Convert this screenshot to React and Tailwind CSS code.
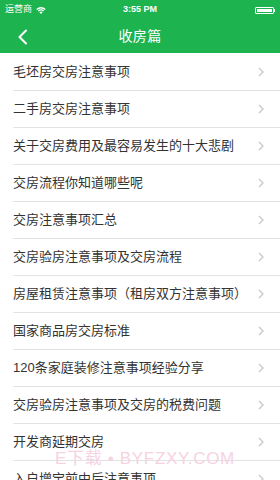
const ITEMS = [
  '毛坯房交房注意事项',
  '二手房交房注意事项',
  '关于交房费用及最容易发生的十大悲剧',
  '交房流程你知道哪些呢',
  '交房注意事项汇总',
  '交房验房注意事项及交房流程',
  '房屋租赁注意事项（租房双方注意事项）',
  '国家商品房交房标准',
  '120条家庭装修注意事项经验分享',
  '交房验房注意事项及交房的税费问题',
  '开发商延期交房',
  '入户增宝前中后注意事项',
];

const FONT = { fontFamily: '"Liberation Sans", "Noto Sans CJK SC", sans-serif' };

export default function App() {
  return (
    <div className="relative w-[280px] h-[480px] overflow-hidden bg-white" style={FONT}>
      {/* ── Header ─────────────────────────────── */}
      <header className="bg-[#1db34f] text-white h-[53px] flex flex-col">
        <div className="h-[20px] flex items-center justify-between px-[5px] relative">
          <div className="flex items-center gap-[4px] text-[9px]">
            <span>运营商</span>
            <svg width="10" height="8" viewBox="0 0 10 8" fill="white">
              <path d="M5 8 L3.4 6.2 A2.4 2.4 0 0 1 6.6 6.2 Z" />
              <path d="M1.9 4.6 A4.4 4.4 0 0 1 8.1 4.6 L7.2 5.5 A3.1 3.1 0 0 0 2.8 5.5 Z" />
              <path d="M0.3 3 A6.8 6.8 0 0 1 9.7 3 L8.8 3.9 A5.5 5.5 0 0 0 1.2 3.9 Z" />
            </svg>
          </div>
          <span className="absolute left-1/2 -translate-x-1/2 text-[9px] font-bold">3:55 PM</span>
          <div className="flex items-center">
            <div className="w-[19px] h-[7px] border border-white rounded-[1px] p-[1px]">
              <div className="w-full h-full bg-white" />
            </div>
            <div className="w-[1px] h-[3px] bg-white" />
          </div>
        </div>
        <div className="flex-1 flex items-center relative">
          <svg className="absolute left-[17px]" width="11" height="16" viewBox="0 0 11 16" fill="none">
            <path d="M9 1.5 L2.5 8 L9 14.5" stroke="white" strokeWidth="2.1" strokeLinecap="round" strokeLinejoin="round" />
          </svg>
          <h1 className="w-full text-center text-[14px] tracking-wide">收房篇</h1>
        </div>
      </header>

      {/* ── List ───────────────────────────────── */}
      <ul className="pt-[1px]">
        {ITEMS.map((t) => (
          <li key={t} className="pl-[13px]">
            <div className="h-[37px] flex items-center justify-between border-b border-[#e2e2e2] pr-[16px]">
              <span className="text-[13px] text-[#333]">{t}</span>
              <svg width="6" height="10" viewBox="0 0 6 10" fill="none">
                <path d="M1 1 L5 5 L1 9" stroke="#c7c7cc" strokeWidth="1.3" />
              </svg>
            </div>
          </li>
        ))}
      </ul>

      {/* watermark */}
      <div className="absolute left-[55px] top-[446px] text-[17px] text-[#f6d3e2] tracking-[0.04em] pointer-events-none whitespace-nowrap">
        E下载 • BYFZXY.COM
      </div>
    </div>
  );
}
